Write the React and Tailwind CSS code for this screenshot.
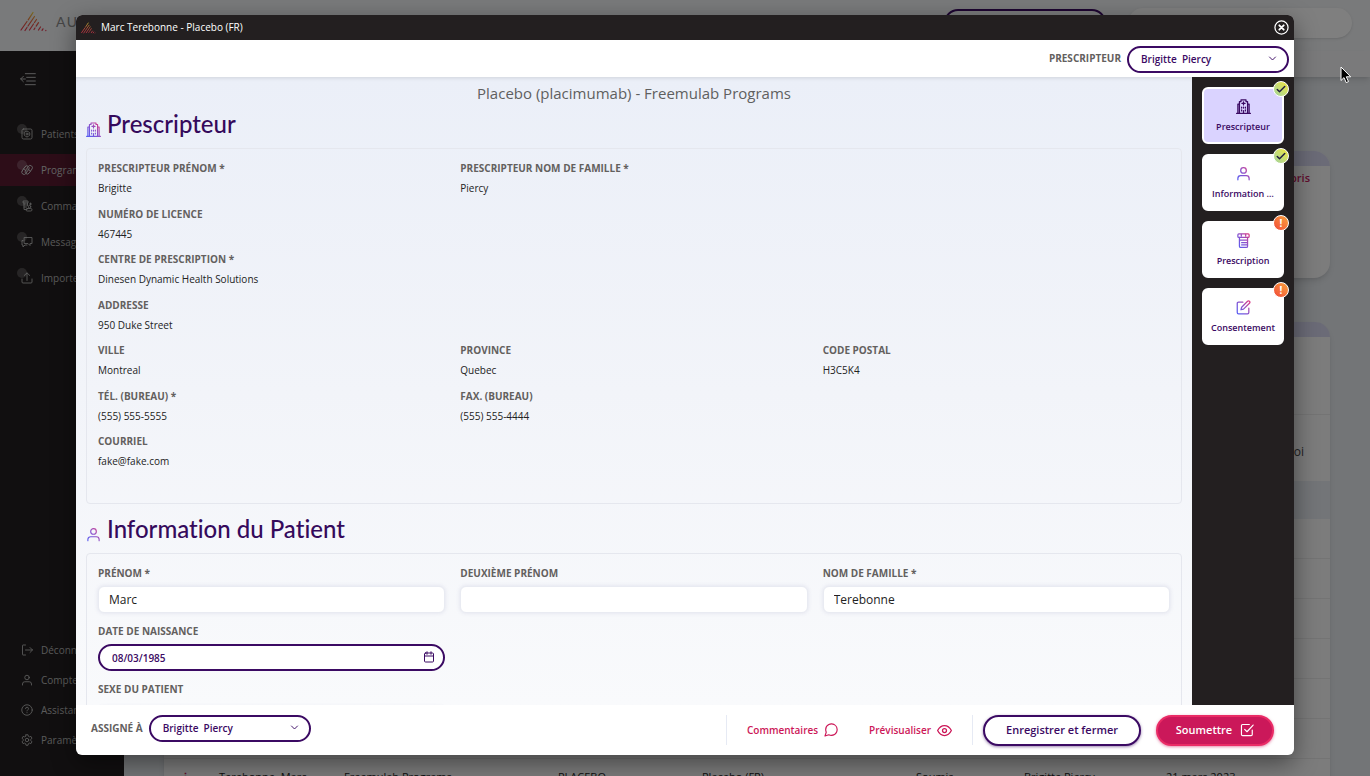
import React from "react";

const HOSPITAL = (
  <>
    <path d="M1 23h22M3 23V8h2.500M21 23V8h-2.500M5.500 23V4H8V1.500h8V4h2.500v19" />
    <path d="M12 4.500v5M9.500 7h5M9 13v1.500M15 13v1.500M12 13v1.500M9 17.500V19M15 17.500V19M12 18.500V23" />
  </>
);
const USER = (
  <>
    <circle cx="12" cy="7" r="4.500" />
    <path d="M3 22v-2a4.500 4.500 0 0 1 4.500-4.500h9A4.500 4.500 0 0 1 21 20v2" />
  </>
);
const BOTTLE = (
  <>
    <rect x="3" y="1.500" width="18" height="5.500" rx="1.500" />
    <path d="M8.500 2v3M15.500 2v3M5.500 7v14a2 2 0 0 0 2 2h9a2 2 0 0 0 2-2V7M5.500 11.500h13M9 15.500h9.500M9 19h9.500" />
  </>
);
const EDIT = (
  <>
    <path d="M11 3.500H4a2 2 0 0 0-2 2V20a2 2 0 0 0 2 2h14.500a2 2 0 0 0 2-2v-7" />
    <path d="M18.500 2.100a2.100 2.100 0 0 1 3 3L12 14.600l-4 1 1-4z" />
  </>
);
const COMMENT = (
  <path d="M22.500 11.300a9.700 9.700 0 0 1-1 4.400 9.800 9.800 0 0 1-8.800 5.400 9.700 9.700 0 0 1-4.400-1L1.700 22.300l2.200-6.600a9.700 9.700 0 0 1-1-4.400 9.800 9.800 0 0 1 5.400-8.800 9.700 9.700 0 0 1 4.400-1h.6a9.800 9.800 0 0 1 9.200 9.200z" />
);
const EYE = (
  <>
    <path d="M1 12s4-8 11-8 11 8 11 8-4 8-11 8S1 12 1 12z" />
    <circle cx="12" cy="12" r="3.200" />
  </>
);
const CHECKBOX = (
  <>
    <path d="M8 11l4 4L22.500 3.500" />
    <path d="M21 12v7.500a2 2 0 0 1-2 2H4.500a2 2 0 0 1-2-2v-15a2 2 0 0 1 2-2H16" />
  </>
);
const CALENDAR = (
  <>
    <rect x="3" y="4" width="18" height="18" rx="2" />
    <path d="M16 1.500v5M8 1.500v5M3 10h18" />
  </>
);
const CHEVRON = <path d="M4 8l8 8 8-8" />;
const COLLAPSE = <path d="M8 4h15M10 9.500h13M10 15h13M8 20.500h15M1 12h7M5 8l-4 4 4 4" />;
const PATIENTS = (
  <>
    <rect x="2" y="2" width="20" height="20" rx="3" />
    <path d="M10 6.500h4l3.500 3.500v4L14 17.500h-4L6.500 14v-4z" />
    <circle cx="12" cy="12" r="2" />
  </>
);
const PILLS = (
  <>
    <rect x="0" y="8" width="19" height="9" rx="4.500" transform="rotate(-55 9 13)" />
    <rect x="7" y="8" width="19" height="9" rx="4.500" transform="rotate(-55 15 13)" />
    <path d="M5 10l6 4M13 10l6 4" />
  </>
);
const ORDERS = (
  <>
    <path d="M5 2h9v4H5zM6 6v13h6M13 6v5M6 10h6M6 14h5M19 6v4M17 8h4" />
    <rect x="10" y="17" width="12" height="5" rx="2.500" />
    <circle cx="17" cy="13.500" r="2.500" />
  </>
);
const MESSAGES = <path d="M7 3h15v12h-4v4l-4-4H7zM4 9H2v9h2v4l4-4h4" />;
const UPLOAD = <path d="M2 14v6a2 2 0 0 0 2 2h16a2 2 0 0 0 2-2v-6M12 17V2M6.500 7L12 1.800 17.500 7" />;
const LOGOUT = <path d="M9 2H4a1 1 0 0 0-1 1v18a1 1 0 0 0 1 1h5M9 12h14M18 7l5 5-5 5" />;
const HELP = (
  <>
    <circle cx="12" cy="12" r="10.500" />
    <path d="M9 9.300a3 3 0 0 1 6 .2c0 2-3 2.500-3 4.300M12 17.200v.3" />
  </>
);
const GEAR = (
  <>
    <circle cx="12" cy="12" r="3.500" />
    <path d="M10 1.500h4l.7 3.100 2.200 1.200 3-1 2 3.500-2.200 2.300v2.800l2.200 2.300-2 3.500-3-1-2.200 1.200-.7 3.100h-4l-.7-3.100-2.200-1.200-3 1-2-3.500 2.200-2.300v-2.800L2.100 8.300l2-3.500 3 1 2.200-1.200z" />
  </>
);

function Icon({ children, className = "", gradient = false, weight = 2 }) {
  return (
    <svg
      viewBox="0 0 24 24"
      fill="none"
      stroke={gradient ? "url(#violetPink)" : "currentColor"}
      strokeWidth={weight}
      strokeLinecap="round"
      strokeLinejoin="round"
      className={`shrink-0 ${className}`}
      aria-hidden="true"
    >
      {children}
    </svg>
  );
}

function Logo({ className }) {
  return (
    <svg viewBox="0 0 27 21" className={className} fill="none" stroke="url(#flame)" strokeWidth="1.200" strokeLinecap="round" aria-hidden="true">
      <path d="M1 19L7 10.500M8.200 8.800L13 1.500M5 19.500L7 16.500M8 15L14.500 5.500M9.500 19L13.500 13M14.500 11.500L16.500 8.500" />
      <path d="M14 18.500l1-1.500M16.200 15.200l2.300-3.500M18.500 19l2-3M22 19.300l1-1.500M25.800 19.500l.1-.1" />
    </svg>
  );
}

function Gradients() {
  return (
    <svg className="absolute size-0" aria-hidden="true">
      <defs>
        <linearGradient id="violetPink" gradientUnits="userSpaceOnUse" x1="2" y1="20" x2="22" y2="4">
          <stop offset="0" stopColor="#5a5cf0" />
          <stop offset="0.5" stopColor="#8a52cc" />
          <stop offset="1" stopColor="#d83a86" />
        </linearGradient>
        <linearGradient id="flame" gradientUnits="userSpaceOnUse" x1="0" y1="20" x2="0" y2="1">
          <stop offset="0" stopColor="#e5304f" />
          <stop offset="0.5" stopColor="#e8603f" />
          <stop offset="1" stopColor="#efd93a" />
        </linearGradient>
      </defs>
    </svg>
  );
}

const mainNav = [
  ["Patients", PATIENTS],
  ["Programmes", PILLS],
  ["Commandes", ORDERS],
  ["Messages", MESSAGES],
  ["Importer", UPLOAD],
];
const userNav = [
  ["Déconnexion", LOGOUT],
  ["Compte", USER],
  ["Assistance", HELP],
  ["Paramètres", GEAR],
];

function Sidebar() {
  return (
    <nav className="flex w-[124px] shrink-0 flex-col bg-[#231f20] pb-[21px] text-[10px] text-[#b4b4b4]">
      <button type="button" aria-label="Réduire le menu" className="mt-5 ml-5 w-4">
        <Icon className="size-4" weight={1.5}>{COLLAPSE}</Icon>
      </button>
      <ul className="mt-[31px] flex flex-col gap-1">
        {mainNav.map(([label, icon]) => (
          <li key={label}>
            <a
              href="#"
              className={
                label === "Programmes"
                  ? "flex h-8 items-center gap-2 bg-[#5a1a31] pl-[21px] text-[#c8c8c8]"
                  : "flex h-8 items-center gap-2 pl-[21px]"
              }
            >
              <span className="relative">
                <span className="absolute -top-1 -left-1 size-2.5 rounded-full bg-white/20" />
                <Icon className="size-3" weight={1.8}>{icon}</Icon>
              </span>
              {label}
            </a>
          </li>
        ))}
      </ul>
      <ul className="mt-auto flex flex-col">
        {userNav.map(([label, icon]) => (
          <li key={label}>
            <a href="#" className="flex h-[30px] items-center gap-2 pl-[21px]">
              <Icon className="size-3" weight={1.8}>{icon}</Icon>
              {label}
            </a>
          </li>
        ))}
      </ul>
    </nav>
  );
}

function BackgroundPage() {
  return (
    <div className="flex h-full flex-col bg-[#e6eaee]" aria-hidden="true" inert>
      <header className="flex h-[51px] shrink-0 items-start justify-between bg-[#f2f4f6] pr-[18px] pl-5">
        <div className="mt-[11px] flex items-center gap-[9px]">
          <Logo className="h-[21px] w-[27px]" />
          <span className="font-['Lato',sans-serif] text-sm tracking-widest text-[#8c8c8c]">AURORA</span>
        </div>
        <div className="mt-2 flex gap-[22px]">
          <div className="mt-px h-7 w-[162px] rounded-full border-2 border-[#3b0a63]" />
          <div className="h-[30px] w-[224px] rounded-full bg-white shadow-sm" />
        </div>
      </header>
      <div className="flex min-h-0 flex-1">
        <Sidebar />
        <main className="flex min-w-0 flex-1 flex-col">
          <div className="h-[26px] shrink-0 bg-[#f4f5f6] shadow-md" />
          <div className="flex min-h-0 flex-1 flex-col gap-11 overflow-hidden pt-[74px] pr-10 pl-10">
            <section className="h-[127px] shrink-0 overflow-hidden rounded-2xl bg-[#f8f8f8] shadow-md">
              <div className="h-[15px] bg-[#d6d6ee]" />
              <p className="pt-[2px] pr-5 text-right text-[11px] leading-5 font-semibold text-[#c4185c]">Appris</p>
            </section>
            <section className="shrink-0 rounded-t-2xl bg-[#f8f8f8] text-xs text-[#222222] shadow-md">
              <div className="h-[15px] rounded-t-2xl bg-[#d6d6ee]" />
              <div className="h-[78px] border-b border-[#e8e8e8]" />
              <div className="flex h-[66px] items-center justify-end pt-2 pr-[26px] text-xs text-[#444444]">Envoi</div>
              <div className="h-[38px] bg-[#e6eaf0]" />
              {[0, 1, 2, 3, 4, 5].map((row) => (
                <div key={row} className="h-10 border-b border-[#e8e8e8]" />
              ))}
              <div className="grid grid-cols-[39px_125px_214px_144px_214px_108px_142px_auto] pt-2 text-[11px] leading-5">
                <span className="pl-4 font-bold text-[#c4185c]">⋮</span>
                <span className="pl-4">Terebonne, Marc</span>
                <span className="pl-4">Freemulab Programs</span>
                <span className="pl-4">PLACEBO</span>
                <span className="pl-4">Placebo (FR)</span>
                <span className="pl-4">Soumis</span>
                <span className="pl-4">Brigitte Piercy</span>
                <span className="pl-4">21 mars 2023</span>
              </div>
            </section>
          </div>
        </main>
      </div>
    </div>
  );
}

function PillSelect({ id, label }) {
  return (
    <div className="flex items-center gap-[6px]">
      <label htmlFor={id} className="text-[10px] font-bold text-[#63605e]">{label}</label>
      <div className="relative">
        <select
          id={id}
          className="h-[27px] w-[162px] appearance-none rounded-full border-2 border-[#3b0a63] bg-white pl-3 text-[10px] font-semibold text-[#3b0a63]"
        >
          <option>{"Brigitte\u00a0 Piercy"}</option>
        </select>
        <Icon className="pointer-events-none absolute top-[9px] right-3 size-[9px] text-[#3b0a63]" weight={2.5}>{CHEVRON}</Icon>
      </div>
    </div>
  );
}

function SectionHeading({ icon, children }) {
  return (
    <h2 className="flex h-[38px] items-center gap-[6px] font-['Lato',sans-serif] text-2xl font-medium text-[#350a5c] [font-variant-ligatures:none]">
      <Icon gradient className="mt-[10px] size-[15px]" weight={1.8}>{icon}</Icon>
      {children}
    </h2>
  );
}

const prescriber = [
  [["Prescripteur prénom *", "Brigitte"], ["Prescripteur nom de famille *", "Piercy"]],
  [["Numéro de licence", "467445"]],
  [["Centre de prescription *", "Dinesen Dynamic Health Solutions"]],
  [["Addresse", "950 Duke Street"]],
  [["Ville", "Montreal"], ["Province", "Quebec"], ["Code postal", "H3C5K4"]],
  [["Tél. (bureau) *", "(555) 555-5555"], ["Fax. (bureau)", "(555) 555-4444"]],
  [["Courriel", "fake@fake.com"]],
];

const LABEL = "block text-[10px] leading-5 font-bold uppercase text-[#63605e]";
const FIELD = "h-[27px] w-full rounded-md border border-[#e9ebf2] bg-white px-[10px] text-xs text-[#222222] shadow-[0_0_4px_rgba(90,90,150,0.15)]";

function FormBody() {
  return (
    <div className="min-w-0 flex-1 overflow-hidden bg-linear-to-b from-[#ebeff8] via-[#f2f4f9] to-[#f9fafc] px-[10px] shadow-[inset_0_4px_4px_-3px_rgba(0,0,0,0.12)]">
      <p className="pt-1 text-center text-[15px] leading-6 text-[#5f5f5f]">Placebo (placimumab) - Freemulab Programs</p>
      <SectionHeading icon={HOSPITAL}>Prescripteur</SectionHeading>
      <div className="mt-[5px] h-[356px] rounded-sm border border-[#e5e7ee] px-[11px] pt-[9px]">
        <dl className="flex h-[313px] flex-col justify-between">
          {prescriber.map((row, i) => (
            <div key={i} className="grid grid-cols-3 gap-x-[15px]">
              {row.map(([label, value]) => (
                <div key={label}>
                  <dt className={LABEL}>{label}</dt>
                  <dd className="text-[10px] leading-5 text-[#222222]">{value}</dd>
                </div>
              ))}
            </div>
          ))}
        </dl>
      </div>
      <div className="pt-[6px]">
        <SectionHeading icon={USER}>Information du Patient</SectionHeading>
      </div>
      <form className="mt-[5px] h-60 rounded-sm border border-[#e5e7ee] px-[11px] pt-[9px]">
        <div className="grid grid-cols-3 gap-x-[15px] gap-y-2">
          <div>
            <label htmlFor="first" className={LABEL}>Prénom *</label>
            <input id="first" defaultValue="Marc" className={`mt-[3px] ${FIELD}`} />
          </div>
          <div>
            <label htmlFor="middle" className={LABEL}>Deuxième prénom</label>
            <input id="middle" className={`mt-[3px] ${FIELD}`} />
          </div>
          <div>
            <label htmlFor="last" className={LABEL}>Nom de famille *</label>
            <input id="last" defaultValue="Terebonne" className={`mt-[3px] ${FIELD}`} />
          </div>
          <div className="col-start-1">
            <label htmlFor="birth" className={LABEL}>Date de naissance</label>
            <div className="relative mt-[3px]">
              <input
                id="birth"
                defaultValue="08/03/1985"
                className="block h-[27px] w-full rounded-full border-2 border-[#3b0a63] bg-white px-3 text-[10px] font-semibold text-[#3b0a63]"
              />
              <Icon className="pointer-events-none absolute top-[7px] right-[10px] size-3 text-[#3b0a63]">{CALENDAR}</Icon>
            </div>
          </div>
          <div className="col-start-1">
            <label htmlFor="sex" className={LABEL}>Sexe du patient</label>
            <input id="sex" className={`mt-2 ${FIELD}`} />
          </div>
        </div>
      </form>
    </div>
  );
}

const steps = [
  ["Prescripteur", HOSPITAL, true],
  ["Information …", USER, true],
  ["Prescription", BOTTLE, false],
  ["Consentement", EDIT, false],
];

function StepRail() {
  return (
    <aside className="flex w-[102px] shrink-0 flex-col gap-[10px] bg-[#231f20] px-[10px] pt-[10px]">
      {steps.map(([label, icon, done], i) => (
        <button
          key={label}
          type="button"
          className={
            i === 0
              ? "relative flex h-[57px] flex-col items-center justify-center gap-[5px] rounded-md border-2 border-white bg-[#dad3ff] pt-[2px] text-[#3b0a63]"
              : "relative flex h-[57px] flex-col items-center justify-center gap-[5px] rounded-md border-2 border-white bg-white pt-[2px] text-[#3b0a63]"
          }
        >
          <Icon gradient={i !== 0} className="size-[15px]">{icon}</Icon>
          <span className="text-[9px] leading-4 font-semibold">{label}</span>
          <span
            className={
              done
                ? "absolute -top-2 -right-[7px] flex size-4 items-center justify-center rounded-full border border-white bg-linear-to-tr from-[#9fd39a] to-[#f0e526] text-[#231f40]"
                : "absolute -top-2 -right-[7px] flex size-4 items-center justify-center rounded-full border border-white bg-linear-to-tr from-[#f04438] to-[#f8a13c] text-[10px] leading-none font-bold text-white"
            }
          >
            {done ? <Icon className="size-[10px]" weight={3.5}><path d="M3 13l5.500 5.500L21 6" /></Icon> : "!"}
          </span>
        </button>
      ))}
    </aside>
  );
}

function Dialog() {
  return (
    <div
      role="dialog"
      aria-label="Marc Terebonne - Placebo (FR)"
      className="flex h-full w-full flex-col overflow-hidden rounded-md bg-white shadow-[0_8px_24px_rgba(0,0,0,0.45)]"
    >
      <div className="flex h-[25px] shrink-0 items-center justify-between bg-[#231f20] pr-[5px] pl-[5px] text-white">
        <div className="flex items-center gap-[5px]">
          <Logo className="h-3 w-[15px]" />
          <h1 className="text-[10px] font-medium">Marc Terebonne - Placebo (FR)</h1>
        </div>
        <button type="button" aria-label="Fermer">
          <Icon className="size-[15px]" weight={2}>
            <circle cx="12" cy="12" r="10.500" />
            <path d="M8.500 8.500l7 7M15.500 8.500l-7 7" strokeWidth="3" />
          </Icon>
        </button>
      </div>
      <div className="flex h-[37px] shrink-0 items-center justify-end pr-[5px]">
        <PillSelect id="prescriber" label="PRESCRIPTEUR" />
      </div>
      <div className="flex min-h-0 flex-1">
        <FormBody />
        <StepRail />
      </div>
      <footer className="flex h-[50px] shrink-0 items-center justify-between pr-5 pl-[15px]">
        <div className="pb-1">
          <PillSelect id="assignee" label="ASSIGNÉ À" />
        </div>
        <div className="flex items-center text-[10px] font-semibold text-[#cc1757]">
          <div className="flex h-[30px] items-center gap-[31px] border-x border-[#e6eaf4] px-5">
            <button type="button" className="flex items-center gap-[6px]">
              Commentaires
              <Icon className="size-[14px]">{COMMENT}</Icon>
            </button>
            <button type="button" className="flex items-center gap-[6px]">
              Prévisualiser
              <Icon className="size-[15px]">{EYE}</Icon>
            </button>
          </div>
          <button
            type="button"
            className="ml-[10px] h-[31px] w-[158px] rounded-full border-2 border-[#3b0a63] bg-white text-[11px] text-[#3b0a63] shadow-[0_1px_3px_rgba(59,10,99,0.5)]"
          >
            Enregistrer et fermer
          </button>
          <button
            type="button"
            className="ml-[15px] flex h-[31px] w-[118px] items-center justify-center gap-2 rounded-full border-2 border-[#ea2c66] bg-[#cb185a] text-[11px] text-white shadow-[0_1px_3px_rgba(203,24,90,0.5)]"
          >
            Soumettre
            <Icon className="size-[14px]">{CHECKBOX}</Icon>
          </button>
        </div>
      </footer>
    </div>
  );
}

export default function App() {
  return (
    <div className="relative h-screen overflow-hidden font-['Open_Sans','Noto_Sans',sans-serif] antialiased">
      <Gradients />
      <BackgroundPage />
      <div className="absolute inset-0 bg-black/50 pt-[15px] pr-[76px] pb-[21px] pl-[76px]">
        <Dialog />
      </div>
      <svg viewBox="0 0 12 18" className="absolute top-[66px] right-[18px] h-[18px] w-3" aria-hidden="true">
        <path d="M1 1v13.500l3-2.900 2.200 5 2.300-1-2.200-4.800h4.400z" fill="#000000" stroke="#ffffff" strokeWidth="1" />
      </svg>
    </div>
  );
}
